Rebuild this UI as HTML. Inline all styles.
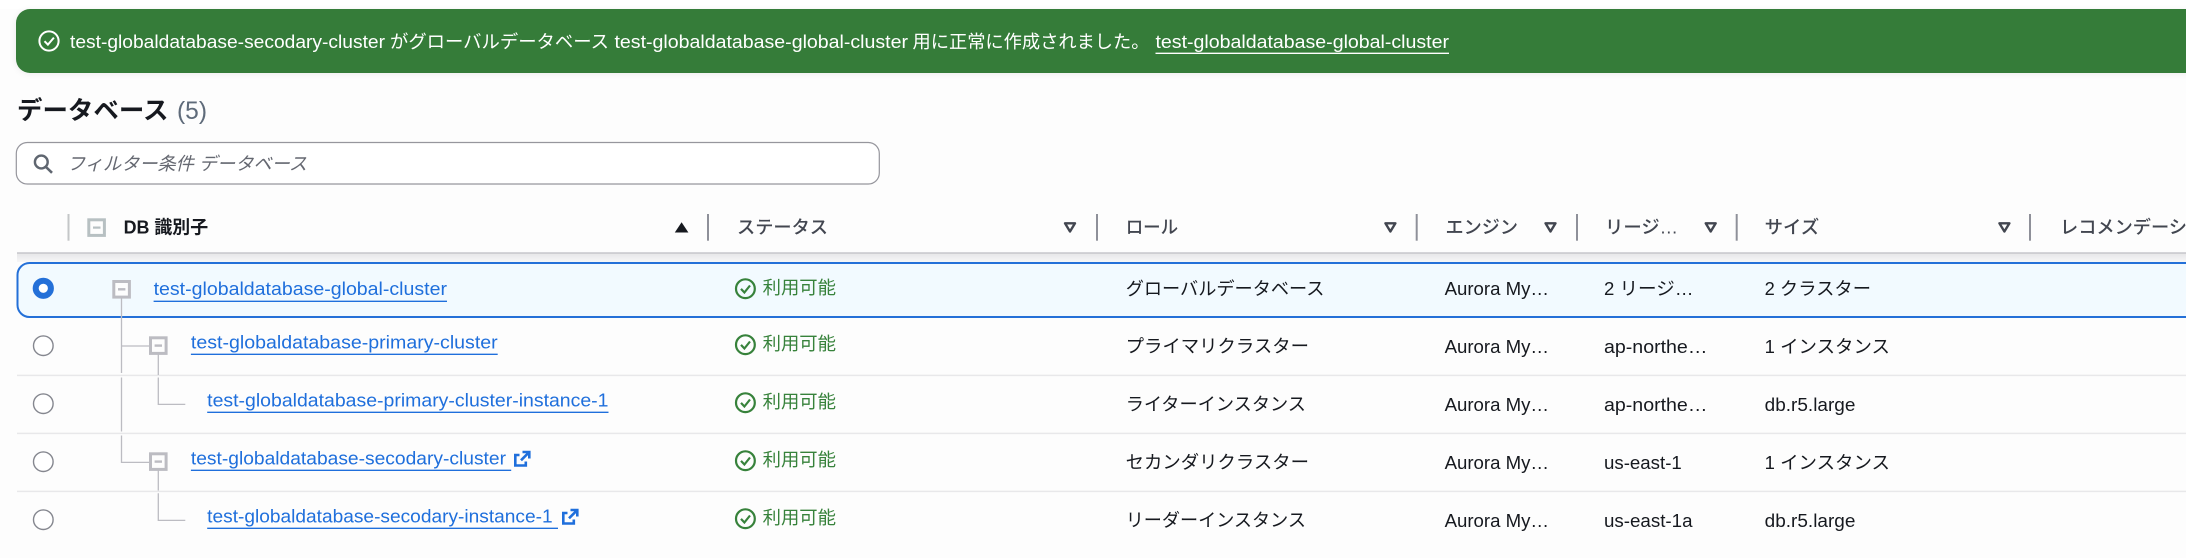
<!DOCTYPE html>
<html lang="ja"><head><meta charset="utf-8"><title>データベース</title>
<style>
html,body{margin:0;padding:0;background:#fdfdfd;width:2186px;height:558px;overflow:hidden}
svg{display:block}
text{font-family:"Liberation Sans","Noto Sans CJK JP",sans-serif;font-size:18.2px;fill:#16191f;white-space:pre}
.b{fill:#fff}.h{font-weight:500;fill:#424650}.l{fill:#1f6fdc}.g{fill:#37823b}
.ln{stroke:#bcbcc2;stroke-width:1.3;fill:none}.dv{stroke:#e8e8ea;stroke-width:1.5}
.sp{stroke:#8e9099;stroke-width:2}.u{stroke:#1f6fdc;stroke-width:1.4}
.f{fill:none;stroke:#424650;stroke-width:2.4;stroke-linejoin:round}
.r{fill:#fff;stroke:#85878f;stroke-width:1.4}
.st{fill:none;stroke:#37823b;stroke-width:2.2}
.bx{fill:#fdfdfd;stroke:#bcbcc2;stroke-width:3}.m{stroke:#bcbcc2;stroke-width:2.4}
.x{fill:none;stroke:#1f6fdc;stroke-width:2.6}
</style></head><body>
<svg width="2186" height="558" viewBox="0 0 2186 558" xmlns="http://www.w3.org/2000/svg">
<defs>
<linearGradient id="sh" x1="0" y1="0" x2="0" y2="1"><stop offset="0" stop-color="#e6e6e8"/><stop offset="1" stop-color="#f6f6f7"/></linearGradient>
<filter id="bs" x="-2%" y="-30%" width="104%" height="160%"><feGaussianBlur stdDeviation="4"/></filter>
</defs>
<rect width="2186" height="9" fill="#fff"/>
<!-- banner -->
<rect x="16" y="11" width="2190" height="62" rx="14" fill="#000" opacity=".08" filter="url(#bs)"/>
<rect x="16" y="9" width="2190" height="64" rx="14" fill="#357c39"/>
<circle cx="49" cy="41" r="9.6" fill="none" stroke="#fff" stroke-width="2"/>
<path d="M44.5 41.2l3.4 3.4 6-7" fill="none" stroke="#fff" stroke-width="2"/>
<text class="b" x="70" y="48" textLength="315" lengthAdjust="spacingAndGlyphs">test-globaldatabase-secodary-cluster</text>
<text class="b" x="390" y="48" textLength="219" lengthAdjust="spacingAndGlyphs">がグローバルデータベース</text>
<text class="b" x="614.5" y="48" textLength="293.5" lengthAdjust="spacingAndGlyphs">test-globaldatabase-global-cluster</text>
<text class="b" x="912.5" y="48" textLength="237" lengthAdjust="spacingAndGlyphs">用に正常に作成されました。</text>
<text class="b" x="1155.5" y="48" textLength="293.5" lengthAdjust="spacingAndGlyphs">test-globaldatabase-global-cluster</text>
<line x1="1155.5" x2="1449" y1="53.3" y2="53.3" stroke="#fff" stroke-width="1.4"/>
<!-- title -->
<text x="17" y="119" style="font-size:25px;font-weight:700" textLength="151.5" lengthAdjust="spacingAndGlyphs">データベース</text>
<text x="177" y="119" style="font-size:25px;fill:#5f6b7a" textLength="30" lengthAdjust="spacingAndGlyphs">(5)</text>
<!-- search -->
<rect x="16.3" y="142.5" width="863" height="41.5" rx="11" fill="#fff" stroke="#96969d" stroke-width="1.2"/>
<circle cx="41.3" cy="162" r="6.4" fill="none" stroke="#5f6670" stroke-width="2.4"/>
<line x1="46" y1="167" x2="52" y2="172.8" stroke="#5f6670" stroke-width="2.6"/>
<text x="67" y="170" style="font-style:italic;fill:#656871" textLength="240" lengthAdjust="spacingAndGlyphs">フィルター条件 データベース</text>
<!-- header -->
<rect x="17" y="253" width="2169" height="9" fill="url(#sh)"/>
<line x1="17" x2="2186" y1="253" y2="253" stroke="#c6c6cb" stroke-width="1.4"/>
<line x1="68.5" x2="68.5" y1="214" y2="240.7" stroke="#c4c6c8" stroke-width="2"/>
<line class="sp" x1="708" x2="708" y1="214" y2="240.7"/>
<line class="sp" x1="1097" x2="1097" y1="214" y2="240.7"/>
<line class="sp" x1="1416.7" x2="1416.7" y1="214" y2="240.7"/>
<line class="sp" x1="1577" x2="1577" y1="214" y2="240.7"/>
<line class="sp" x1="1736.7" x2="1736.7" y1="214" y2="240.7"/>
<line class="sp" x1="2030" x2="2030" y1="214" y2="240.7"/>
<rect x="88.8" y="219.8" width="15.6" height="15.6" fill="none" stroke="#b7c0c2" stroke-width="3"/>
<line x1="93" x2="100.5" y1="227.6" y2="227.6" stroke="#b7c0c2" stroke-width="2.2"/>
<text x="123.6" y="233.5" style="font-weight:700;fill:#16191f" textLength="84.5" lengthAdjust="spacingAndGlyphs">DB 識別子</text>
<path d="M674.8 232.5L681.6 222.2L688.4 232.5Z" fill="#16191f"/>
<text class="h" x="737" y="233.5" textLength="91" lengthAdjust="spacingAndGlyphs">ステータス</text>
<text class="h" x="1125.7" y="233.5" textLength="52.5" lengthAdjust="spacingAndGlyphs">ロール</text>
<text class="h" x="1445.5" y="233.5" textLength="72.5" lengthAdjust="spacingAndGlyphs">エンジン</text>
<text class="h" x="1605" y="233.5" textLength="73" lengthAdjust="spacingAndGlyphs">リージ…</text>
<text class="h" x="1764.7" y="233.5" textLength="54.5" lengthAdjust="spacingAndGlyphs">サイズ</text>
<text class="h" x="2060" y="233.5" textLength="127" lengthAdjust="spacingAndGlyphs">レコメンデーシ</text>
<path class="f" d="M1065 223.3H1075L1070 231.5Z"/>
<path class="f" d="M1385.4 223.3H1395.4L1390.4 231.5Z"/>
<path class="f" d="M1545.5 223.3H1555.5L1550.5 231.5Z"/>
<path class="f" d="M1705.7 223.3H1715.7L1710.7 231.5Z"/>
<path class="f" d="M1999.4 223.3H2009.4L2004.4 231.5Z"/>
<!-- selected row -->
<rect x="17.5" y="263" width="2190" height="54" rx="12" fill="#f2faff" stroke="#2470d8" stroke-width="2"/>
<!-- dividers -->
<line class="dv" x1="17" x2="2186" y1="375.4" y2="375.4"/>
<line class="dv" x1="17" x2="2186" y1="433.4" y2="433.4"/>
<line class="dv" x1="17" x2="2186" y1="491.4" y2="491.4"/>
<!-- tree -->
<path class="ln" d="M121.5 298V373M121.5 377.5V431.5M121.5 435.5V462.4H149M121.5 346H149"/>
<path class="ln" d="M158.3 354V375M158.3 377.5V404.4H185.3"/>
<path class="ln" d="M158.3 470V490.5M158.3 493.3V520.4H185.3"/>
<rect class="bx" x="113.8" y="281.5" width="15.6" height="15.6"/><line class="m" x1="118" x2="125.4" y1="289.3" y2="289.3"/>
<rect class="bx" x="150.5" y="337.8" width="15.6" height="15.6"/><line class="m" x1="154.6" x2="162" y1="345.6" y2="345.6"/>
<rect class="bx" x="150.5" y="453.8" width="15.6" height="15.6"/><line class="m" x1="154.6" x2="162" y1="461.6" y2="461.6"/>
<!-- radios -->
<circle cx="43.3" cy="288.3" r="7.6" fill="#fff" stroke="#2470d8" stroke-width="6"/>
<circle class="r" cx="43.3" cy="345.7" r="9.8"/>
<circle class="r" cx="43.3" cy="403.7" r="9.8"/>
<circle class="r" cx="43.3" cy="461.7" r="9.8"/>
<circle class="r" cx="43.3" cy="519.7" r="9.8"/>
<!-- links -->
<text class="l" x="153.6" y="295" textLength="293.4" lengthAdjust="spacingAndGlyphs">test-globaldatabase-global-cluster</text>
<line class="u" x1="153.6" x2="447" y1="301.3" y2="301.3"/>
<text class="l" x="190.9" y="348.5" textLength="306.8" lengthAdjust="spacingAndGlyphs">test-globaldatabase-primary-cluster</text>
<line class="u" x1="190.9" x2="497.7" y1="354.3" y2="354.3"/>
<text class="l" x="207.2" y="406.5" textLength="401.3" lengthAdjust="spacingAndGlyphs">test-globaldatabase-primary-cluster-instance-1</text>
<line class="u" x1="207.2" x2="608.5" y1="412.3" y2="412.3"/>
<text class="l" x="190.9" y="464.5" textLength="315.1" lengthAdjust="spacingAndGlyphs">test-globaldatabase-secodary-cluster</text>
<line class="u" x1="190.9" x2="511.2" y1="470.3" y2="470.3"/>
<text class="l" x="207.2" y="522.5" textLength="345.4" lengthAdjust="spacingAndGlyphs">test-globaldatabase-secodary-instance-1</text>
<line class="u" x1="207.2" x2="558" y1="528.3" y2="528.3"/>
<path class="x" d="M519.5 455H515.3V465.5H525.8V461.5M521 460.3L529 452.3M522.5 452H529.3V458.5"/>
<path class="x" d="M567.5 513H563.3V523.5H573.8V519.5M569 518.3L577 510.3M570.5 510H577.3V516.5"/>
<!-- status -->
<g class="st">
<circle cx="745.4" cy="288.7" r="9.4"/><path d="M741 288.9l3.4 3.6 5.6-7"/>
<circle cx="745.4" cy="344.7" r="9.4"/><path d="M741 344.9l3.4 3.6 5.6-7"/>
<circle cx="745.4" cy="402.7" r="9.4"/><path d="M741 402.9l3.4 3.6 5.6-7"/>
<circle cx="745.4" cy="460.7" r="9.4"/><path d="M741 460.9l3.4 3.6 5.6-7"/>
<circle cx="745.4" cy="518.7" r="9.4"/><path d="M741 518.9l3.4 3.6 5.6-7"/>
</g>
<text class="g" x="762.6" y="294" textLength="73.4" lengthAdjust="spacingAndGlyphs">利用可能</text>
<text class="g" x="762.6" y="350" textLength="73.4" lengthAdjust="spacingAndGlyphs">利用可能</text>
<text class="g" x="762.6" y="408" textLength="73.4" lengthAdjust="spacingAndGlyphs">利用可能</text>
<text class="g" x="762.6" y="466" textLength="73.4" lengthAdjust="spacingAndGlyphs">利用可能</text>
<text class="g" x="762.6" y="524" textLength="73.4" lengthAdjust="spacingAndGlyphs">利用可能</text>
<!-- role -->
<text x="1125.7" y="295" textLength="198.8" lengthAdjust="spacingAndGlyphs">グローバルデータベース</text>
<text x="1125.7" y="352.5" textLength="183.3" lengthAdjust="spacingAndGlyphs">プライマリクラスター</text>
<text x="1125.7" y="410.5" textLength="180.3" lengthAdjust="spacingAndGlyphs">ライターインスタンス</text>
<text x="1125.7" y="468.5" textLength="183.3" lengthAdjust="spacingAndGlyphs">セカンダリクラスター</text>
<text x="1125.7" y="526.5" textLength="180.3" lengthAdjust="spacingAndGlyphs">リーダーインスタンス</text>
<!-- engine -->
<text x="1444.6" y="295" textLength="104.4" lengthAdjust="spacingAndGlyphs">Aurora My…</text>
<text x="1444.6" y="353" textLength="104.4" lengthAdjust="spacingAndGlyphs">Aurora My…</text>
<text x="1444.6" y="411" textLength="104.4" lengthAdjust="spacingAndGlyphs">Aurora My…</text>
<text x="1444.6" y="469" textLength="104.4" lengthAdjust="spacingAndGlyphs">Aurora My…</text>
<text x="1444.6" y="527" textLength="104.4" lengthAdjust="spacingAndGlyphs">Aurora My…</text>
<!-- region -->
<text x="1604" y="295" textLength="89.4" lengthAdjust="spacingAndGlyphs">2 リージ…</text>
<text x="1604" y="353" textLength="103.4" lengthAdjust="spacingAndGlyphs">ap-northe…</text>
<text x="1604" y="411" textLength="103.4" lengthAdjust="spacingAndGlyphs">ap-northe…</text>
<text x="1604" y="469" textLength="77.8" lengthAdjust="spacingAndGlyphs">us-east-1</text>
<text x="1604" y="527" textLength="88.5" lengthAdjust="spacingAndGlyphs">us-east-1a</text>
<!-- size -->
<text x="1764.7" y="295" textLength="106.3" lengthAdjust="spacingAndGlyphs">2 クラスター</text>
<text x="1764.7" y="353" textLength="125.3" lengthAdjust="spacingAndGlyphs">1 インスタンス</text>
<text x="1764.7" y="411" textLength="90.7" lengthAdjust="spacingAndGlyphs">db.r5.large</text>
<text x="1764.7" y="469" textLength="125.3" lengthAdjust="spacingAndGlyphs">1 インスタンス</text>
<text x="1764.7" y="527" textLength="90.7" lengthAdjust="spacingAndGlyphs">db.r5.large</text>
</svg>
</body></html>
